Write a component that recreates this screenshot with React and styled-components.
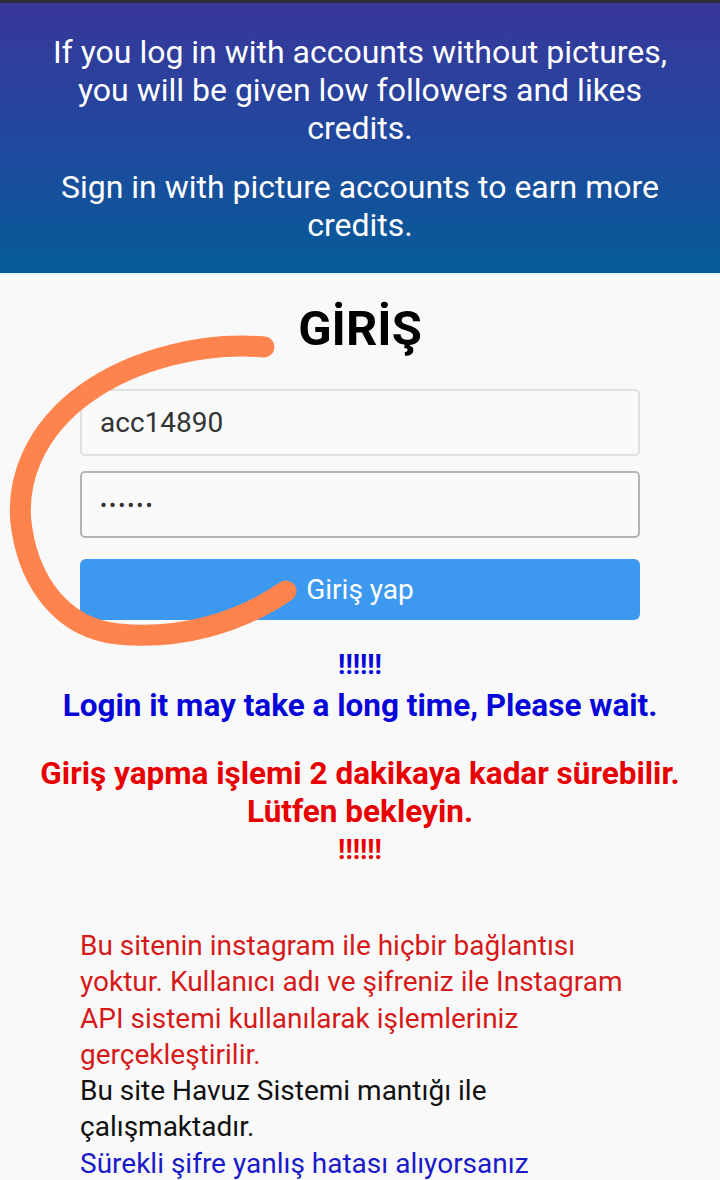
import React from 'react'
import styled, { createGlobalStyle } from 'styled-components'

const GlobalStyle = createGlobalStyle`
  html, body {
    margin: 0;
    padding: 0;
    background: #f9f9f9;
  }
  body {
    font-family: Roboto, "Liberation Sans", Arial, sans-serif;
  }
`

const Page = styled.div`
  position: relative;
  min-height: 1180px;
  overflow: hidden;
`

const StatusStrip = styled.div`
  height: 3px;
  background: #2e2e38;
`

const Banner = styled.header`
  background: linear-gradient(180deg, #38379a 0%, #21489e 50%, #055c98 100%);
  border-bottom: 2px solid #dff6ff;
  padding: 30px 36px 29px;
  color: #fff;
  text-align: center;
`

const BannerText = styled.p`
  margin: 0;
  font-size: 32px;
  line-height: 38px;

  & + & {
    margin-top: 21px;
  }
`

const Main = styled.main`
  display: flex;
  flex-direction: column;
  align-items: center;
`

const Title = styled.h1`
  margin: 24px 0 0;
  font-size: 49px;
  font-weight: 700;
  line-height: 60px;
  color: #000;
`

const Form = styled.form`
  width: 560px;
  display: flex;
  flex-direction: column;
  gap: 15px;
  margin-top: 30px;
`

const Field = styled.input`
  box-sizing: border-box;
  width: 100%;
  height: 67px;
  padding: 0 18px;
  border: 2px solid ${p => (p.$active ? '#b4b4b4' : '#e0e0e0')};
  border-radius: 5px;
  background: #fafafa;
  font-family: Roboto, "Liberation Sans", Arial, sans-serif;
  font-size: ${p => (p.type === 'password' ? 21 : 28)}px;
  letter-spacing: ${p => (p.type === 'password' ? '2px' : '0')};
  color: #333;
  outline: none;
`

const SubmitButton = styled.button`
  margin-top: 6px;
  height: 61px;
  border: none;
  border-radius: 6px;
  background: #3d99ef;
  color: #fff;
  font-family: Roboto, "Liberation Sans", Arial, sans-serif;
  font-size: 28px;
`

const Notice = styled.div`
  margin-top: 23px;
  text-align: center;
  font-weight: 700;
  font-size: 31.5px;
  line-height: 38px;
  color: ${p => p.$color};

  & + & {
    margin-top: 30px;
  }
`

const Bang = styled.div`
  font-size: 27px;
  line-height: ${p => p.$lh || 38}px;
`

const Info = styled.div`
  width: 560px;
  margin-top: 59px;
  font-size: 28px;
  line-height: 36.3px;
`

const InfoLine = styled.span`
  display: block;
  color: ${p => p.$color};
`

const Scribble = styled.svg`
  position: absolute;
  left: 0;
  top: 0;
  pointer-events: none;
`

export default function App() {
  return (
    <>
      <GlobalStyle />
      <Page>
        <StatusStrip />
        <Banner>
          <BannerText>
            If you log in with accounts without pictures, you will be given low followers and likes credits.
          </BannerText>
          <BannerText>Sign in with picture accounts to earn more credits.</BannerText>
        </Banner>

        <Main>
          <Title>GİRİŞ</Title>
          <Form onSubmit={e => e.preventDefault()}>
            <Field type="text" defaultValue="acc14890" />
            <Field type="password" defaultValue="123456" $active />
            <SubmitButton type="submit">Giriş yap</SubmitButton>
          </Form>

          <Notice $color="#0606d9">
            <Bang $lh={44}>!!!!!!</Bang>
            Login it may take a long time, Please wait.
          </Notice>
          <Notice $color="#e80000">
            Giriş yapma işlemi 2 dakikaya kadar sürebilir.
            <br />
            Lütfen bekleyin.
            <Bang>!!!!!!</Bang>
          </Notice>

          <Info>
            <InfoLine $color="#d61a1a">
              Bu sitenin instagram ile hiçbir bağlantısı yoktur. Kullanıcı adı ve şifreniz ile Instagram API sistemi kullanılarak işlemleriniz gerçekleştirilir.
            </InfoLine>
            <InfoLine $color="#111">Bu site Havuz Sistemi mantığı ile çalışmaktadır.</InfoLine>
            <InfoLine $color="#1a1acb">Sürekli şifre yanlış hatası alıyorsanız</InfoLine>
          </Info>
        </Main>

        <Scribble width="720" height="700" viewBox="0 0 720 700">
          <path
            d="M264 347 C 205 342, 135 358, 85 394 C 35 430, 14 482, 22 530 C 30 580, 60 628, 118 634 C 178 640, 238 624, 286 591"
            fill="none"
            stroke="#ff834d"
            strokeWidth="21"
            strokeLinecap="round"
            strokeLinejoin="round"
          />
        </Scribble>
      </Page>
    </>
  )
}
